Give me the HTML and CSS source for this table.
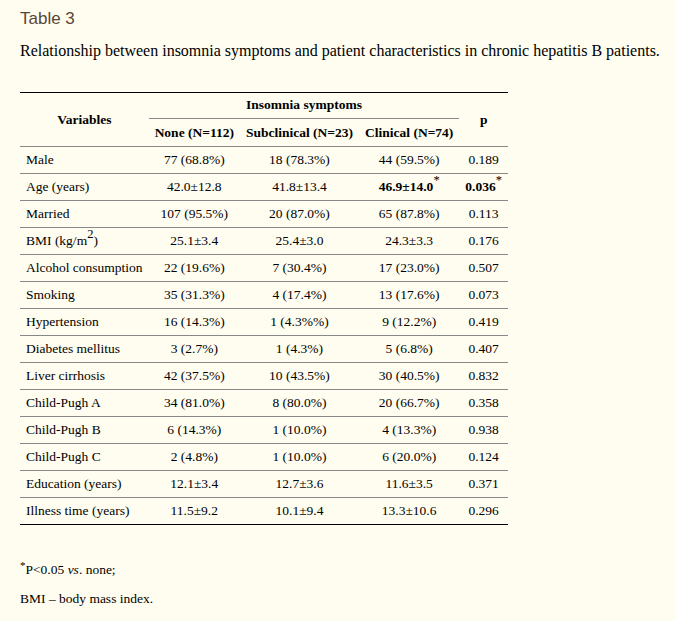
FILE: index.html
```html
<!DOCTYPE html>
<html>
<head>
<meta charset="utf-8">
<link rel="stylesheet" href="styles.css">
</head>
<body>
<div class="page">
  <h2 class="label">Table 3</h2>
  <p class="caption">Relationship between insomnia symptoms and patient characteristics in chronic hepatitis B patients.</p>
  <table class="data">
    <thead>
      <tr class="h1">
        <th rowspan="2" class="var">Variables</th>
        <th colspan="3" class="group"><span class="group-line">Insomnia symptoms</span></th>
        <th rowspan="2" class="p">p</th>
      </tr>
      <tr class="h2">
        <th>None (N=112)</th>
        <th>Subclinical (N=23)</th>
        <th>Clinical (N=74)</th>
      </tr>
    </thead>
    <tbody>
      <tr><td>Male</td><td>77 (68.8%)</td><td>18 (78.3%)</td><td>44 (59.5%)</td><td>0.189</td></tr>
      <tr><td>Age (years)</td><td>42.0±12.8</td><td>41.8±13.4</td><td><b>46.9±14.0</b><sup>*</sup></td><td><b>0.036</b><sup>*</sup></td></tr>
      <tr><td>Married</td><td>107 (95.5%)</td><td>20 (87.0%)</td><td>65 (87.8%)</td><td>0.113</td></tr>
      <tr><td>BMI (kg/m<sup>2</sup>)</td><td>25.1±3.4</td><td>25.4±3.0</td><td>24.3±3.3</td><td>0.176</td></tr>
      <tr><td>Alcohol consumption</td><td>22 (19.6%)</td><td>7 (30.4%)</td><td>17 (23.0%)</td><td>0.507</td></tr>
      <tr><td>Smoking</td><td>35 (31.3%)</td><td>4 (17.4%)</td><td>13 (17.6%)</td><td>0.073</td></tr>
      <tr><td>Hypertension</td><td>16 (14.3%)</td><td>1 (4.3%%)</td><td>9 (12.2%)</td><td>0.419</td></tr>
      <tr><td>Diabetes mellitus</td><td>3 (2.7%)</td><td>1 (4.3%)</td><td>5 (6.8%)</td><td>0.407</td></tr>
      <tr><td>Liver cirrhosis</td><td>42 (37.5%)</td><td>10 (43.5%)</td><td>30 (40.5%)</td><td>0.832</td></tr>
      <tr><td>Child-Pugh A</td><td>34 (81.0%)</td><td>8 (80.0%)</td><td>20 (66.7%)</td><td>0.358</td></tr>
      <tr><td>Child-Pugh B</td><td>6 (14.3%)</td><td>1 (10.0%)</td><td>4 (13.3%)</td><td>0.938</td></tr>
      <tr><td>Child-Pugh C</td><td>2 (4.8%)</td><td>1 (10.0%)</td><td>6 (20.0%)</td><td>0.124</td></tr>
      <tr><td>Education (years)</td><td>12.1±3.4</td><td>12.7±3.6</td><td>11.6±3.5</td><td>0.371</td></tr>
      <tr><td>Illness time (years)</td><td>11.5±9.2</td><td>10.1±9.4</td><td>13.3±10.6</td><td>0.296</td></tr>
    </tbody>
  </table>
  <div class="notes">
    <p class="note"><sup>*</sup>P&lt;0.05 <i>vs</i>. none;</p>
    <p class="note">BMI – body mass index.</p>
  </div>
</div>
</body>
</html>
```
FILE: styles.css
```css
html, body {
  margin: 0;
  padding: 0;
  background: #fffdf0;
}
.page {
  padding: 9px 0 0 20px;
  font-family: "Liberation Serif", "Times New Roman", serif;
  color: #000;
}
.label {
  font-family: "Liberation Sans", Arial, sans-serif;
  font-weight: normal;
  font-size: 17px;
  line-height: 20px;
  color: #5a4636;
  margin: 0;
}
.caption {
  font-size: 16px;
  line-height: 19px;
  margin: 12px 0 0 0;
  white-space: nowrap;
}
.data {
  margin-top: 32px;
  width: 486px;
  border-collapse: collapse;
  font-size: 13.5px;
  border-top: 1.5px solid #000;
  border-bottom: 1.5px solid #000;
}
.data th {
  font-weight: bold;
  padding: 0 6px;
  text-align: center;
  white-space: nowrap;
}
.data thead {
  border-bottom: 1px solid #888;
}
.h1 th { height: 26px; }
.h2 th { height: 27px; }
.data th.group {
  padding: 0;
  vertical-align: bottom;
}
.group-line {
  display: block;
  border-bottom: 1px solid #888;
  padding-bottom: 5px;
}
.data td {
  height: 26px;
  padding: 0 6px;
  text-align: center;
  white-space: nowrap;
  border-bottom: 1px solid #888;
}
.data tbody tr:last-child td { border-bottom: none; }
.data td:first-child { text-align: left; }
.data sup {
  font-size: 12.5px;
  line-height: 0;
  vertical-align: 7px;
}
.notes {
  margin-top: 36px;
  font-size: 13.5px;
}
.note {
  margin: 0 0 12px 0;
  line-height: 17px;
}
.note sup {
  font-size: 11px;
  line-height: 0;
  vertical-align: 5px;
}
```
